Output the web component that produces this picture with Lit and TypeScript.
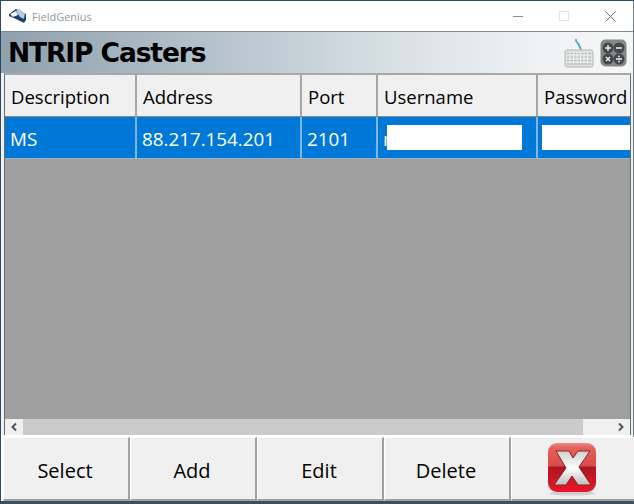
import { LitElement, html, css } from "lit";
import { customElement } from "lit/decorators.js";

const FONT = css`"Open Sans", "Noto Sans", sans-serif`;

@customElement("app-root")
export class AppRoot extends LitElement {
  static styles = css`
    :host { display: block; width: 634px; height: 504px; overflow: hidden; font-family: ${FONT}; }
    .win { box-sizing: border-box; width: 634px; height: 504px; display: flex; flex-direction: column;
      border: 1px solid #2b4a63; border-width: 1px 0 0 1px; background: #f0f0f0; border-bottom: 3px solid #3c4f5e; border-right: 1px solid #6f7f8a; }
    .title { height: 30px; flex: none; background: #fff; display: flex; align-items: center; }
    .logo { margin: 0 0 0 8px; width: 18px; height: 16px; flex: none; }
    .appname { margin-left: 5px; font-size: 11px; color: #959595; }
    .ctrls { margin-left: auto; display: flex; }
    .ctrl { width: 46px; height: 30px; display: flex; align-items: center; justify-content: center; }
    .head { height: 42px; flex: none; border-top: 1px solid #7e8a92; box-sizing: border-box; display: flex; align-items: center; padding: 0 6px 0 7px;
      background: linear-gradient(90deg, #8fa1ad 0%, #b3c1ca 32%, #d8e0e5 62%, #f0f2f3 85%, #f6f7f7 100%); }
    h1 { margin: 0; font: bold 26.5px "DejaVu Sans", sans-serif; color: #000; letter-spacing: -1.1px; line-height: 40px; }
    .icons { margin-left: auto; display: flex; align-items: center; gap: 5px; }
    .grid { margin: 0 2px 0 3px; height: 362px; flex: none; background: #9f9f9f; border: 1px solid #6a6a6a; border-top: 2px solid #a8a8a8; border-bottom: none; position: relative; overflow: hidden; display: flex; flex-direction: column; box-sizing: border-box; }
    .hrow, .row { display: grid; grid-template-columns: 132px 165px 76px 160px 110px; width: 643px; flex: none; }
    .hrow { height: 41px; background: #f0f0f0; border-bottom: 1px solid #8a8a8a; box-sizing: content-box; }
    .hrow > div { display: flex; align-items: center; padding-left: 6px; font-size: 18.5px; color: #000; border-right: 2px solid #a6a6a6; box-sizing: border-box; padding-top: 1px; }
    .row { height: 41px; background: #0078d7; border-bottom: 1px solid #a0b4c4; box-sizing: content-box; }
    .row > div { display: flex; align-items: center; padding-left: 5px; padding-top: 2px; font-size: 18.8px; color: #fff; border-right: 2px solid #7fb6e6; box-sizing: border-box; }
    .spacer { flex: 1; }
    .sb { height: 16px; flex: none; background: #f0f0f0; display: flex; align-items: center; }
    .arrow { width: 18px; height: 16px; flex: none; display: flex; align-items: center; justify-content: center; }
    .track { flex: 1; height: 16px; background: #f0f0f0; }
    .thumb { width: 95%; height: 100%; background: #cbcbcb; }
    .redact { position: absolute; background: #fff; top: 50px; height: 25px; }
    .r1 { left: 382px; width: 135px; }
    .r2 { left: 537px; width: 90px; }
    .btns { flex: 1; display: grid; grid-template-columns: repeat(5, 127px); padding: 2px 0 0 2px; background: #fff; }
    .btn { background: #f0f0f0; border: 1px solid #fff; border-right: 2px solid #a0a0a0; border-bottom: 2px solid #a0a0a0; box-sizing: border-box;
      display: flex; align-items: center; justify-content: center; font-size: 20px; color: #000; padding: 3px 2px 0 0; }
    .btn.close { padding: 0 4px 0 0; }
  `;

  render() {
    return html`<div class="win">
      <div class="title">
        <svg class="logo" viewBox="0 0 18 16">
          <path d="M0 6 L7 1 L17 6 L17 12 L15 15 L7 11 L0 8 Z" fill="#1d3f6e"/>
          <path d="M7 3 L10 1 L16 5 L15 11 L11 9 Z" fill="#b9cbe0"/>
          <path d="M1 6 L7 3 L9 7 L4 9 Z" fill="#f4f7fb"/>
        </svg>
        <span class="appname">FieldGenius</span>
        <div class="ctrls">
          <div class="ctrl"><svg width="10" height="10"><path d="M0 5.5H10" stroke="#8e8e8e"/></svg></div>
          <div class="ctrl"><svg width="10" height="10"><rect x=".5" y=".5" width="9" height="9" fill="none" stroke="#e2e2e2"/></svg></div>
          <div class="ctrl"><svg width="11" height="11"><path d="M.5 .5L10.5 10.5M10.5 .5L.5 10.5" stroke="#707070"/></svg></div>
        </div>
      </div>
      <div class="head">
        <h1>NTRIP Casters</h1>
        <div class="icons">
          <svg width="32" height="30" viewBox="0 0 32 30">
            <path d="M13 1c-1 3 2 4 3 6s1 3 2 5" fill="none" stroke="#4aa6d4" stroke-width="1.8"/>
            <rect x="2" y="12" width="28" height="17" rx="2" fill="#dfe1e1" stroke="#b4b8b9"/>
            <path d="M4 15.5H28M4 19H28M4 22.5H28M4 26H28" stroke="#aeb2b3" stroke-width=".9"/>
            <path d="M7 14V25M10.5 14V25M14 14V25M17.5 14V25M21 14V25M24.5 14V25" stroke="#f2f3f3" stroke-width="1"/>
          </svg>
          <svg width="27" height="28" viewBox="0 0 27 28">
            <rect x=".5" y=".5" width="26" height="27" rx="5" fill="#858788"/>
            <circle cx="8" cy="9" r="5.5" fill="#46484a"/><circle cx="19" cy="9" r="5.5" fill="#46484a"/>
            <circle cx="8" cy="20" r="5.5" fill="#46484a"/><circle cx="19" cy="20" r="5.5" fill="#46484a"/>
            <path d="M5 9H11M8 6V12M16 9H22M6 18L10 22M10 18L6 22M16 20H22" stroke="#eee" stroke-width="1.4"/>
            <circle cx="19" cy="17.5" r=".9" fill="#eee"/><circle cx="19" cy="22.5" r=".9" fill="#eee"/>
          </svg>
        </div>
      </div>
      <div class="grid">
        <div class="hrow"><div>Description</div><div>Address</div><div>Port</div><div>Username</div><div>Password</div></div>
        <div class="row"><div>MS</div><div>88.217.154.201</div><div>2101</div><div>m</div><div></div></div>
        <div class="spacer"></div>
        <div class="sb">
          <div class="arrow"><svg width="8" height="10"><path d="M6 1.5L2.5 5L6 8.5" fill="none" stroke="#555" stroke-width="2"/></svg></div>
          <div class="track"><div class="thumb"></div></div>
          <div class="arrow"><svg width="8" height="10"><path d="M2 1.5L5.5 5L2 8.5" fill="none" stroke="#555" stroke-width="2"/></svg></div>
        </div>
        <div class="redact r1"></div>
        <div class="redact r2"></div>
      </div>
      <div class="btns">
        <div class="btn">Select</div><div class="btn">Add</div><div class="btn">Edit</div><div class="btn">Delete</div>
        <div class="btn close">
          <svg width="52" height="56" viewBox="0 0 52 56">
            <defs>
              <linearGradient id="rg" x1="0" y1="0" x2="0" y2="1">
                <stop offset="0" stop-color="#e98a84"/><stop offset=".1" stop-color="#e4615c"/><stop offset=".47" stop-color="#dc4a48"/>
                <stop offset=".49" stop-color="#a91820"/><stop offset="1" stop-color="#ec1428"/>
              </linearGradient>
              <linearGradient id="xg" x1="0" y1="0" x2="0" y2="1">
                <stop offset="0" stop-color="#cfcfcf"/><stop offset=".5" stop-color="#fff"/><stop offset="1" stop-color="#bcbcbc"/>
              </linearGradient>
            </defs>
            <ellipse cx="26" cy="52.5" rx="23" ry="2" fill="#cfcfcf"/>
            <rect x="2" y="2" width="48" height="49" rx="9" fill="url(#rg)"/>
            <path d="M10 10H23L27 17L32 10H44L33 26L45 44H32L26 35L20 44H8L20 27Z" fill="url(#xg)" stroke="#8a2226" stroke-width="1"/>
          </svg>
        </div>
      </div>
    </div>`;
  }
}
